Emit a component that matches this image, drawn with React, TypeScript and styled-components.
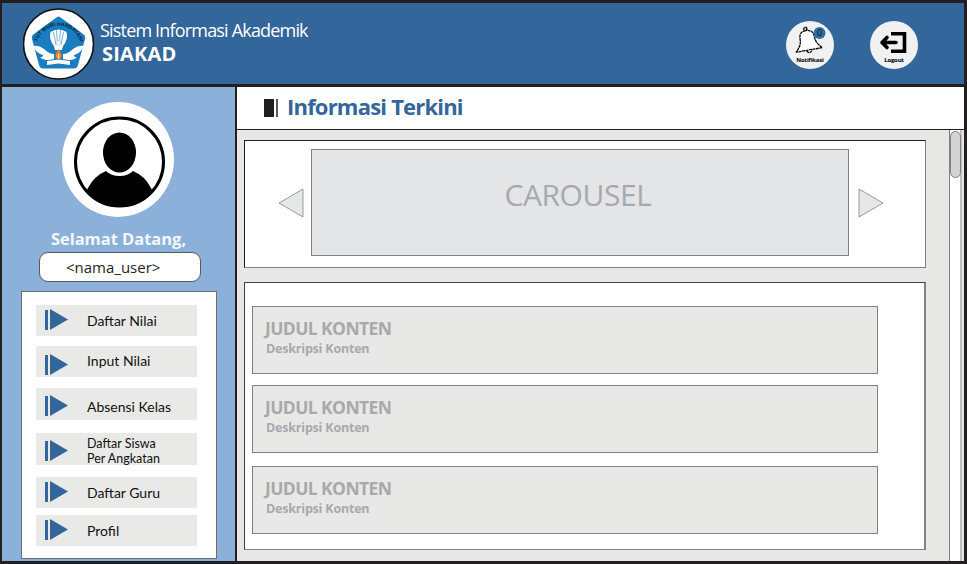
import styled, { createGlobalStyle } from "styled-components"

const BLUE = "#33669a"

const menuItems = [
  { label: "Daftar Nilai", top: 0, height: 31, labelShift: 1, iconShift: -1 },
  { label: "Input Nilai", top: 10, height: 31, labelShift: -1, iconShift: 3 },
  { label: "Absensi Kelas", top: 11, height: 32, labelShift: 5, iconShift: 2 },
  { label: "Daftar Siswa\nPer Angkatan", top: 13, height: 32, labelShift: 3, iconShift: 2, small: true },
  { label: "Daftar Guru", top: 12, height: 31, labelShift: 1, iconShift: -1 },
  { label: "Profil", top: 7, height: 31, labelShift: 0, iconShift: -1 },
]

const contents = [{ top: 0 }, { top: 11 }, { top: 13 }]

const Logo = () => (
  <svg width="72" height="73" viewBox="0 0 72 73">
    <circle cx="35.5" cy="36" r="35" fill="#fff" stroke="#111" strokeWidth="1.6" />
    <path
      d="M35.5 8.5 Q37 8.5 60 26 Q63 28 62 31 L55 57 Q54 60.5 51 60.5 L20 60.5 Q17 60.5 16 57 L9 31 Q8 28 11 26 Q34 8.5 35.5 8.5 Z"
      fill="#1a7cc1"
    />
    <defs>
      <path id="logo-arc" d="M13.5 37 A22.5 22.5 0 0 1 58 37" />
    </defs>
    <LogoCaption>
      <textPath href="#logo-arc" startOffset="50%" textAnchor="middle">
        TUT WURI HANDAYANI
      </textPath>
    </LogoCaption>
    <path d="M27.5 24 Q35.5 19 43.5 24 Q45.5 31 40 38 L39 42 L32 42 L31 38 Q25.5 31 27.5 24 Z" fill="#fff" />
    <path d="M30.5 24 L33 37 M33.5 22.5 L34.7 37 M37.5 22.5 L36.3 37 M40.5 24 L38 37" stroke="#1a7cc1" strokeWidth="0.6" />
    <circle cx="35.5" cy="35" r="2.4" fill="#fff" stroke="#8fb9d8" strokeWidth="0.5" />
    <path d="M10 38 Q16 37 21 41 Q26 46 31 46 L31 51 Q21 53.5 17 49.5 Q20 49 20 47 Q14 46 10 38 Z" fill="#fff" />
    <path d="M61 38 Q55 37 50 41 Q45 46 40 46 L40 51 Q50 53.5 54 49.5 Q51 49 51 47 Q57 46 61 38 Z" fill="#fff" />
    <path d="M35.5 41 Q39.5 46 38.2 50.5 L32.8 50.5 Q31.5 46 35.5 41 Z" fill="#ef7d22" />
    <path d="M35.5 45 Q37 47 36.5 50.5 L34.5 50.5 Q34 47 35.5 45 Z" fill="#fde047" />
    <path d="M24 53 L35.5 51.5 L47 53 L47 57 L35.5 55.5 L24 57 Z" fill="#fff" />
  </svg>
)

const BellIcon = () => (
  <svg width="38" height="30" viewBox="0 0 38 30">
    <g transform="rotate(-10 17 15)" fill="#fff" stroke="#000" strokeWidth="1.3" strokeDasharray="3 0.5" strokeLinejoin="round">
      <circle cx="16.5" cy="2.6" r="1.6" />
      <path d="M16.5 4.3 C10.5 4.3 9.5 8.5 9.5 12.5 C9.5 17 7 20.5 3.5 24 L30 24 C26.5 20.5 24 17 24 12 C24 8 22.5 4.3 16.5 4.3 Z" />
      <path d="M14 24.5 Q16.5 29 19.5 24.5" />
    </g>
    <circle cx="28.5" cy="7" r="6" fill="#2f6ca3" />
    <BadgeCount x="28.5" y="10" textAnchor="middle">
      0
    </BadgeCount>
  </svg>
)

const LogoutIcon = () => (
  <svg width="30" height="24" viewBox="0 0 30 24" fill="none" stroke="#000" strokeWidth="3.6">
    <path d="M12 1.8 H25.5 V19.2 H12" strokeLinejoin="miter" />
    <path d="M17 10.5 H3 M8 5.5 L3 10.5 L8 15.5" strokeLinejoin="round" strokeLinecap="round" />
  </svg>
)

const Avatar = () => (
  <svg width="112" height="115" viewBox="0 0 112 115">
    <ellipse cx="56" cy="57.5" rx="56" ry="57.5" fill="#fff" />
    <defs>
      <clipPath id="avatar-ring">
        <circle cx="57.5" cy="60" r="43.5" />
      </clipPath>
    </defs>
    <circle cx="57.5" cy="60" r="44" fill="#fff" stroke="#000" strokeWidth="3" />
    <ellipse cx="57.5" cy="50.5" rx="16.5" ry="20" fill="#000" />
    <path
      d="M14 110 L26 86 Q32 74 44 69 Q49 74 57.5 74 Q66 74 71 69 Q83 74 89 86 L101 110 Z"
      fill="#000"
      clipPath="url(#avatar-ring)"
    />
  </svg>
)

const ArrowBullet = ({ shift }: { shift: number }) => (
  <BulletSvg $shift={shift} width="24" height="22" viewBox="0 0 24 22" fill={BLUE}>
    <rect x="0" y="1" width="3" height="20" />
    <path d="M5 0 L23 10.5 L5 21 Z" />
  </BulletSvg>
)

const SlideArrow = ({ flip }: { flip?: boolean }) => (
  <svg width="26" height="30" viewBox="0 0 26 30">
    <path
      d={flip ? "M1 1 L25 15 L1 29 Z" : "M25 1 L1 15 L25 29 Z"}
      fill="#e6e7e8"
      stroke="#808285"
      strokeWidth="0.8"
    />
  </svg>
)

export default function App() {
  return (
    <>
      <GlobalStyle />
      <Frame>
        <Header>
          <Brand>
            <Logo />
            <BrandText>
              <AppName>Sistem Informasi Akademik</AppName>
              <AppShort>SIAKAD</AppShort>
            </BrandText>
          </Brand>
          <HeaderActions>
            <RoundAction>
              <BellIcon />
              <ActionLabel>Notifikasi</ActionLabel>
            </RoundAction>
            <RoundAction>
              <LogoutIcon />
              <ActionLabel>Logout</ActionLabel>
            </RoundAction>
          </HeaderActions>
        </Header>
        <Body>
          <Sidebar>
            <Avatar />
            <Welcome>Selamat Datang,</Welcome>
            <UserPill>&lt;nama_user&gt;</UserPill>
            <MenuPanel>
              {menuItems.map((item) => (
                <MenuItem key={item.label} $top={item.top} $height={item.height}>
                  <ArrowBullet shift={item.iconShift} />
                  <MenuLabel $small={item.small} $shift={item.labelShift}>
                    {item.label}
                  </MenuLabel>
                </MenuItem>
              ))}
            </MenuPanel>
          </Sidebar>
          <Main>
            <TitleBar>
              <TitleMark>
                <span />
                <span />
              </TitleMark>
              <Title>Informasi Terkini</Title>
            </TitleBar>
            <ScrollArea>
              <ScrollContent>
                <CarouselCard>
                  <SlideArrow />
                  <CarouselBox>CAROUSEL</CarouselBox>
                  <SlideArrow flip />
                </CarouselCard>
                <ContentCard>
                  {contents.map((c) => (
                    <ContentItem key={c.top} $top={c.top}>
                      <ContentTitle>JUDUL KONTEN</ContentTitle>
                      <ContentDesc>Deskripsi Konten</ContentDesc>
                    </ContentItem>
                  ))}
                </ContentCard>
              </ScrollContent>
              <ScrollTrack>
                <ScrollThumb />
              </ScrollTrack>
            </ScrollArea>
          </Main>
        </Body>
      </Frame>
    </>
  )
}

const GlobalStyle = createGlobalStyle`
  * {
    box-sizing: border-box;
  }

  body {
    margin: 0;
    background: #fff;
    font-family: "Open Sans", "Liberation Sans", sans-serif;
  }
`

const Frame = styled.div`
  width: 967px;
  height: 564px;
  display: flex;
  flex-direction: column;
  overflow: hidden;
  background: #fff;
  border: solid #231f20;
  border-width: 3px 3px 3px 2px;
`

const Header = styled.header`
  height: 84px;
  flex: none;
  display: flex;
  align-items: center;
  justify-content: space-between;
  padding: 1px 46px 0 21px;
  background: ${BLUE};
  border-bottom: 3px solid #231f20;
`

const Brand = styled.div`
  display: flex;
  align-items: center;
  gap: 5px;
`

const LogoCaption = styled.text`
  font-family: "Liberation Sans", sans-serif;
  font-size: 5.2px;
  font-weight: 700;
  fill: #10202e;
`

const BrandText = styled.div`
  display: flex;
  flex-direction: column;
  margin-top: -4px;
`

const AppName = styled.div`
  font-family: "Open Sans", sans-serif;
  font-size: 18px;
  line-height: 24px;
  letter-spacing: -0.82px;
  color: #fff;
`

const AppShort = styled.div`
  margin-left: 2px;
  font-family: "Open Sans", sans-serif;
  font-size: 20px;
  font-weight: 700;
  line-height: 24px;
  letter-spacing: 0.2px;
  color: #fff;
`

const HeaderActions = styled.div`
  display: flex;
  gap: 36px;
  margin-top: 1px;
`

const RoundAction = styled.div`
  width: 48px;
  height: 48px;
  display: flex;
  flex-direction: column;
  align-items: center;
  justify-content: flex-end;
  padding-bottom: 5px;
  border-radius: 50%;
  background: #f1f1f2;

  svg {
    flex: none;
  }
`

const BadgeCount = styled.text`
  font-family: "Open Sans", sans-serif;
  font-size: 9px;
  fill: #111;
`

const ActionLabel = styled.div`
  font-family: "Open Sans", sans-serif;
  font-size: 6px;
  font-weight: 700;
  line-height: 8px;
  letter-spacing: -0.2px;
  color: #000;
`

const Body = styled.div`
  flex: 1;
  min-height: 0;
  display: flex;
`

const Sidebar = styled.aside`
  width: 235px;
  flex: none;
  display: flex;
  flex-direction: column;
  padding: 15px 19px 0;
  background: #8bb0d9;
  border-right: 2px solid #231f20;

  > svg {
    flex: none;
    margin-left: 41px;
  }
`

const Welcome = styled.div`
  margin-top: 11px;
  font-family: "Open Sans", sans-serif;
  font-size: 16.5px;
  font-weight: 700;
  line-height: 22px;
  letter-spacing: -0.03px;
  text-align: center;
  color: #f4f8fc;
`

const UserPill = styled.div`
  width: 162px;
  height: 30px;
  flex: none;
  margin: 2px 0 0 18px;
  padding-left: 26px;
  font-family: "Open Sans", sans-serif;
  font-size: 15px;
  line-height: 28px;
  color: #231f20;
  background: #fff;
  border: 1px solid #58595b;
  border-radius: 9px;
`

const MenuPanel = styled.nav`
  width: 196px;
  height: 268px;
  flex: none;
  margin-top: 9px;
  padding: 13px 19px 0 14px;
  background: #fff;
  border: 1px solid #6d6e71;
`

const MenuItem = styled.div<{ $top: number; $height: number }>`
  height: ${({ $height }) => $height}px;
  margin-top: ${({ $top }) => $top}px;
  display: flex;
  align-items: center;
  gap: 18px;
  padding-left: 9px;
  background: #e9e9e8;
`

const BulletSvg = styled.svg<{ $shift: number }>`
  flex: none;
  transform: translateY(${({ $shift }) => $shift}px);
`

const MenuLabel = styled.div<{ $small?: boolean; $shift: number }>`
  margin-top: ${({ $shift }) => $shift}px;
  font-family: Lato, sans-serif;
  font-size: ${({ $small }) => ($small ? "12.5px" : "14px")};
  line-height: ${({ $small }) => ($small ? "15px" : "18px")};
  white-space: pre-line;
  color: #111;
`

const Main = styled.main`
  flex: 1;
  min-width: 0;
  display: flex;
  flex-direction: column;
`

const TitleBar = styled.div`
  height: 43px;
  flex: none;
  display: flex;
  align-items: center;
  gap: 9px;
  padding: 0 0 1px 27px;
  background: #fff;
  border-bottom: 1px solid #231f20;
`

const TitleMark = styled.div`
  display: flex;
  gap: 2px;
  height: 18px;

  span:first-child {
    width: 10px;
    background: #231f20;
  }

  span:last-child {
    width: 2px;
    background: #58595b;
  }
`

const Title = styled.h1`
  margin: 0 0 3px;
  font-family: "Open Sans", sans-serif;
  font-size: 22px;
  font-weight: 700;
  letter-spacing: -0.8px;
  color: ${BLUE};
`

const ScrollArea = styled.div`
  flex: 1;
  min-height: 0;
  display: flex;
  background: #e7e7e6;
`

const ScrollContent = styled.div`
  flex: 1;
  min-width: 0;
  padding: 10px 23px 0 7px;
`

const CarouselCard = styled.section`
  height: 128px;
  display: flex;
  align-items: center;
  gap: 7px;
  padding: 0 0 0 33px;
  background: #fff;
  border: 1px solid #231f20;
  border-bottom-color: #808285;
  border-right-color: #808285;

  svg {
    flex: none;
    margin-top: -3px;
  }
`

const CarouselBox = styled.div`
  width: 538px;
  height: 107px;
  flex: none;
  margin: -3px 2px 0 0;
  padding: 0 4px 16px 0;
  display: flex;
  align-items: center;
  justify-content: center;
  font-family: "Open Sans", sans-serif;
  font-size: 30px;
  letter-spacing: -0.4px;
  color: #a7a9ac;
  background: #e4e5e7;
  border: 1px solid #808285;
`

const ContentCard = styled.section`
  height: 268px;
  margin-top: 14px;
  padding: 23px 46px 0 7px;
  background: #fff;
  border: 1px solid #414042;
  border-right: 2px solid #808285;
  border-bottom-color: #808285;
`

const ContentItem = styled.article<{ $top: number }>`
  height: 68px;
  margin-top: ${({ $top }) => $top}px;
  padding: 9px 12px 0;
  background: #e8e8e7;
  border: 1px solid #808285;
`

const ContentTitle = styled.div`
  font-family: "Open Sans", sans-serif;
  font-size: 17.5px;
  font-weight: 700;
  line-height: 24px;
  letter-spacing: -0.6px;
  color: #a7a9ac;
`

const ContentDesc = styled.div`
  margin-left: 1px;
  font-family: "Open Sans", sans-serif;
  font-size: 12.5px;
  font-weight: 700;
  line-height: 18px;
  letter-spacing: -0.2px;
  color: #a7a9ac;
`

const ScrollTrack = styled.div`
  width: 13px;
  flex: none;
  margin-right: 2px;
  padding: 1px 0 0;
  background: #fff;
  border-left: 1px solid #808285;
  border-right: 2px solid #bcbec0;
`

const ScrollThumb = styled.div`
  width: 11px;
  height: 47px;
  background: #d1d3d4;
  border: 1px solid #808285;
  border-radius: 6px;
`
